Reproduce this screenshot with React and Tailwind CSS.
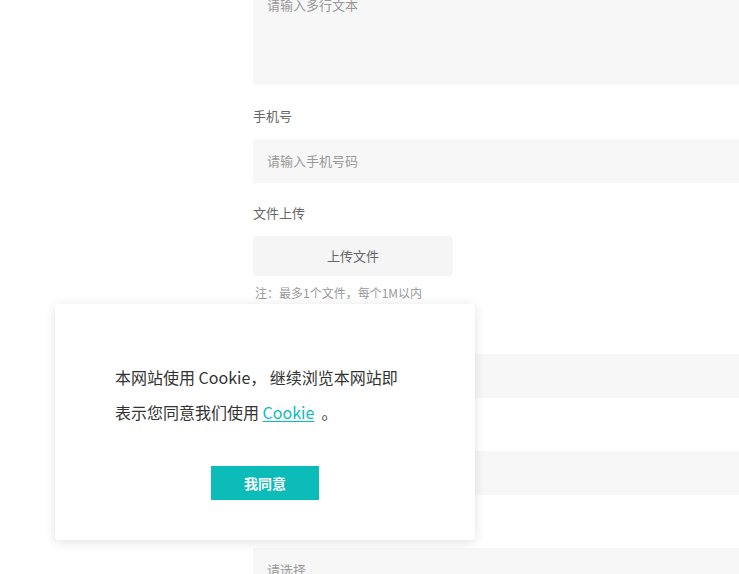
const font = { fontFamily: '"Noto Sans CJK SC", "Noto Sans", sans-serif' }

function Label({ children }) {
  return <div className="mb-3 h-[22px] text-[13px] leading-[22px] text-[#666]">{children}</div>
}

function Field({ label, placeholder, className }) {
  return (
    <div className={className}>
      <Label>{label}</Label>
      <div className="flex h-11 items-center bg-[#f7f7f7] px-[14px] text-[13px] text-[#999]">
        {placeholder}
      </div>
    </div>
  )
}

export default function App() {
  return (
    <div className="relative h-[574px] w-[739px] overflow-hidden bg-white" style={font}>
      <div className="ml-[253px] -mt-[15px]">
        <div className="h-[100px] bg-[#f7f7f7] px-[14px] pt-[10px] text-[13px] leading-5 text-[#999]">
          请输入多行文本
        </div>

        <Field className="mt-5" label="手机号" placeholder="请输入手机号码" />

        <div className="mt-[19px]">
          <Label>文件上传</Label>
          <div className="flex h-10 w-[200px] items-center justify-center rounded-sm bg-[#f5f5f5] text-[13px] text-[#666]">
            上传文件
          </div>
          <div className="mt-2 pl-[2px] text-xs leading-[18px] text-[#999]">注：最多1个文件，每个1M以内</div>
        </div>

        <Field className="mt-[18px]" label="邮箱" placeholder="请输入邮箱" />
        <Field className="mt-[19px]" label="公司名称" placeholder="请输入公司名称" />
        <Field className="mt-[19px]" label="行业" placeholder="请选择" />
      </div>

      <div className="absolute left-[55px] top-[304px] w-[420px] rounded bg-white px-[60px] pb-10 pt-[56px] shadow-[0_2px_12px_rgba(0,0,0,0.12)]">
        <p className="text-base leading-[35px] text-[#333]">
          本网站使用 Cookie， 继续浏览本网站即
          <br />
          表示您同意我们使用{' '}
          <a href="#" className="text-[#0bbcb9] underline underline-offset-2">
            Cookie
          </a>
          {' '}&nbsp;。
        </p>
        <div className="mt-9 flex justify-center">
          <button className="h-[34px] w-[108px] bg-[#0bbcb9] text-sm font-semibold text-white">我同意</button>
        </div>
      </div>
    </div>
  )
}
